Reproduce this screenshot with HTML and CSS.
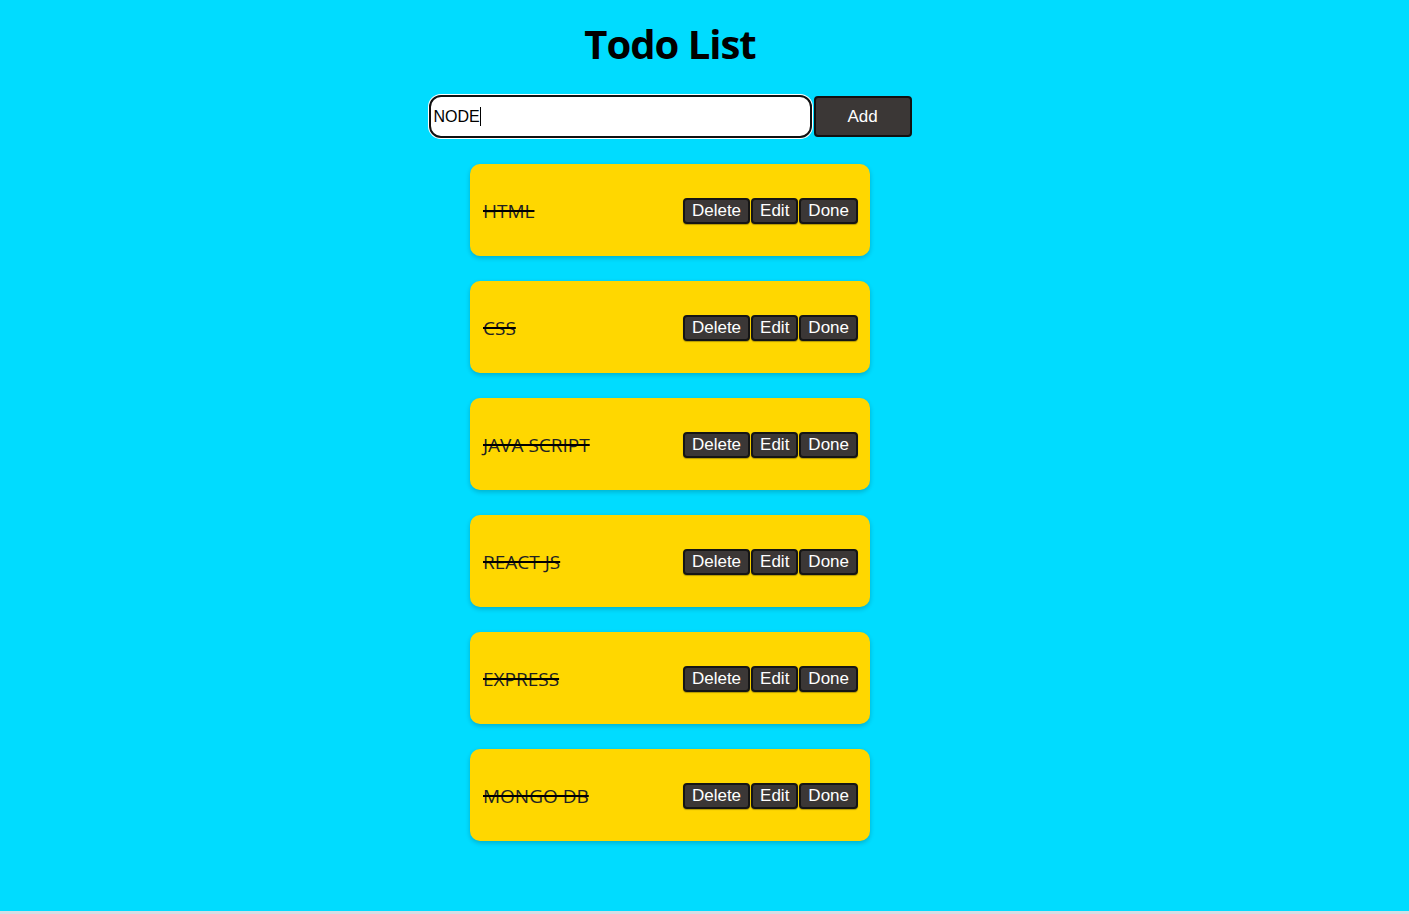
FILE: index.html
```html
<!DOCTYPE html>
<html lang="en">
<head>
<meta charset="utf-8">
<title>Todo List</title>
<link rel="stylesheet" href="styles.css">
</head>
<body>
<div class="app">
  <h1 class="title">Todo List</h1>
  <div class="add-row">
    <div class="input">NODE<span class="caret"></span></div>
    <button class="add-btn">Add</button>
  </div>
  <ul class="list">
    <li class="card"><span class="task">HTML</span><div class="actions"><button class="btn">Delete</button><button class="btn">Edit</button><button class="btn">Done</button></div></li>
    <li class="card"><span class="task">CSS</span><div class="actions"><button class="btn">Delete</button><button class="btn">Edit</button><button class="btn">Done</button></div></li>
    <li class="card"><span class="task">JAVA SCRIPT</span><div class="actions"><button class="btn">Delete</button><button class="btn">Edit</button><button class="btn">Done</button></div></li>
    <li class="card"><span class="task">REACT JS</span><div class="actions"><button class="btn">Delete</button><button class="btn">Edit</button><button class="btn">Done</button></div></li>
    <li class="card"><span class="task">EXPRESS</span><div class="actions"><button class="btn">Delete</button><button class="btn">Edit</button><button class="btn">Done</button></div></li>
    <li class="card"><span class="task">MONGO DB</span><div class="actions"><button class="btn">Delete</button><button class="btn">Edit</button><button class="btn">Done</button></div></li>
  </ul>
</div>
</body>
</html>
```
FILE: styles.css
```css
html {
  background: #d6dde3;
}
body {
  margin: 0;
  height: 911px;
  background: #00dcff;
  overflow: hidden;
}
.app {
  width: 1340px;
  display: flex;
  flex-direction: column;
  align-items: center;
}
.title {
  margin: 20px 0 0;
  font-family: "Open Sans", "Noto Sans", sans-serif;
  font-weight: 700;
  font-size: 40px;
  line-height: 48px;
  color: #000;
  letter-spacing: -1px;
}
.add-row {
  margin-top: 27px;
  display: flex;
  align-items: center;
  gap: 2px;
}
.input {
  box-sizing: border-box;
  width: 383px;
  height: 43px;
  background: #fff;
  border: 2px solid #111;
  border-radius: 12px;
  box-shadow: 0 0 0 1px #fff;
  font-family: "Liberation Sans", Arial, sans-serif;
  font-size: 16px;
  color: #000;
  display: flex;
  align-items: center;
  padding-left: 3px;
}
.caret {
  display: inline-block;
  width: 1px;
  height: 19px;
  background: #000;
}
.add-btn {
  box-sizing: border-box;
  width: 98px;
  height: 41px;
  background: #3b3736;
  border: 2px solid #111;
  border-radius: 4px;
  color: #fff;
  font-family: "Liberation Sans", Arial, sans-serif;
  font-size: 17px;
  padding: 0;
}
.list {
  list-style: none;
  margin: 26px 0 0;
  padding: 0;
  display: flex;
  flex-direction: column;
  gap: 25px;
}
.card {
  box-sizing: border-box;
  width: 400px;
  height: 92px;
  background: #ffd700;
  border-radius: 10px;
  box-shadow: 0 2px 5px rgba(0, 0, 0, 0.2);
  display: flex;
  align-items: center;
  justify-content: space-between;
  padding: 2px 12px 0 13px;
}
.task {
  font-family: "Open Sans", "Noto Sans", sans-serif;
  font-size: 19px;
  color: #222;
  text-decoration: line-through;
  text-decoration-color: #000;
  text-decoration-thickness: 2px;
}
.actions {
  display: flex;
  gap: 1px;
}
.btn {
  box-sizing: border-box;
  height: 26px;
  background: #3b3736;
  border: 2px solid #151515;
  border-radius: 4px;
  color: #fff;
  font-family: "Liberation Sans", Arial, sans-serif;
  font-size: 17px;
  line-height: 20px;
  padding: 0 7px;
  box-shadow: 0 1px 1px rgba(0, 0, 0, 0.3);
}
```
